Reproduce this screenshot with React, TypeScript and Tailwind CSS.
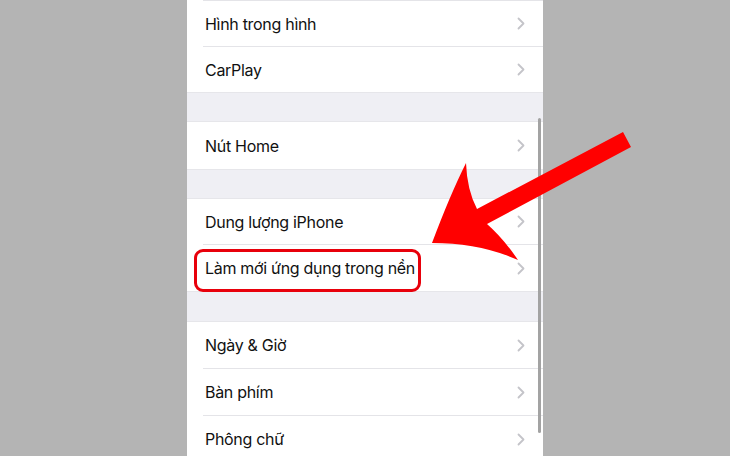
import React from "react";

function Chevron() {
  return (
    <svg width="8" height="13" viewBox="0 0 8 13" className="shrink-0">
      <path d="M1.5 1.5 L6.5 6.5 L1.5 11.5" fill="none" stroke="#c4c4c9" strokeWidth="1.8" strokeLinecap="round" strokeLinejoin="round" />
    </svg>
  );
}

function Row({ label, h = "h-[46px]" }: { label: string; h?: string }) {
  return (
    <div className={`flex items-center justify-between bg-white pl-[18px] pr-[18px] ${h}`}>
      <span className="text-[16px] text-[#111] tracking-[-0.3px]">{label}</span>
      <Chevron />
    </div>
  );
}

function Sep() {
  return (
    <div className="bg-white pl-[16px]">
      <div className="h-px bg-[#e4e4e8]" />
    </div>
  );
}

function Gap({ h }: { h: string }) {
  return <div className={`bg-[#efeff4] border-y border-[#e6e6ea] ${h}`} />;
}

export default function App() {
  return (
    <div className="relative h-[456px] w-[730px] overflow-hidden bg-[#b4b4b4]" style={{ fontFamily: "Inter, 'Noto Sans', sans-serif" }}>
      <div className="relative mx-auto h-full w-[356px] bg-[#efeff4]">
        <Sep />
        <Row label="Hình trong hình" h="h-[45px]" />
        <Sep />
        <Row label="CarPlay" h="h-[45px]" />
        <Gap h="h-[30px]" />
        <Row label="Nút Home" h="h-[47px]" />
        <Gap h="h-[30px]" />
        <Row label="Dung lượng iPhone" h="h-[45px]" />
        <Sep />
        <Row label="Làm mới ứng dụng trong nền" h="h-[46px]" />
        <Gap h="h-[31px]" />
        <Row label="Ngày & Giờ" />
        <Sep />
        <Row label="Bàn phím" />
        <Sep />
        <Row label="Phông chữ" />

        {/* scroll indicator */}
        <div className="absolute left-[351px] top-[118px] h-[315px] w-[2.5px] rounded-full bg-[#a3a3a3]" />

        {/* highlight box */}
        <div className="absolute left-[7px] top-[249px] h-[43px] w-[227px] rounded-[9px] border-[3px] border-[#e8000b]" />
      </div>

      {/* arrow */}
      <svg className="absolute left-0 top-0" width="730" height="456" viewBox="0 0 730 456">
        <path
          d="M432 243 Q450 195 466 163 Q467 190 477 209 L623 132 L631 147 L487 224 Q503 238 518 260 Q480 243 432 243 Z"
          fill="#ff0000"
        />
      </svg>
    </div>
  );
}
